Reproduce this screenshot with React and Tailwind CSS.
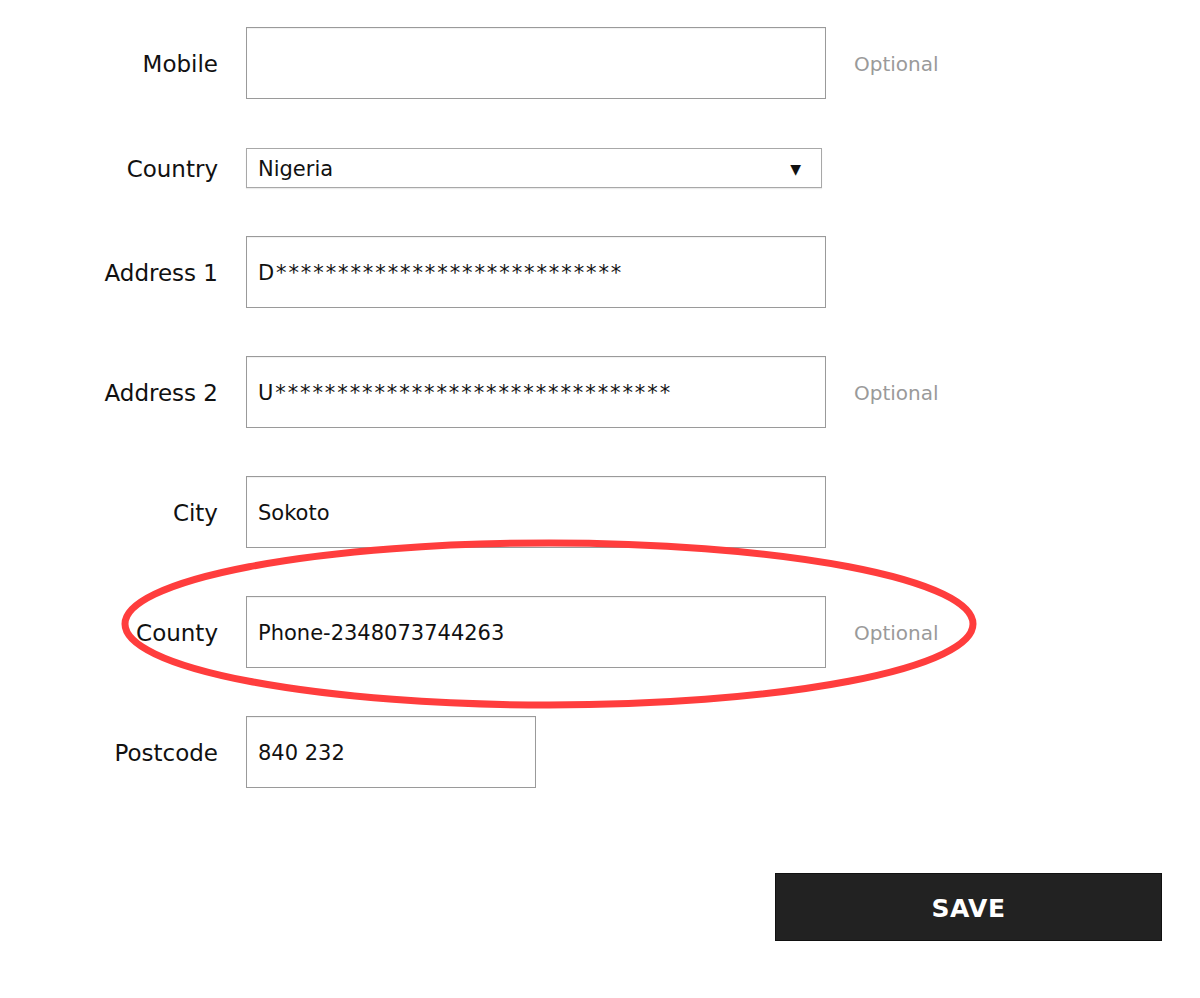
import React from 'react';

const font = { fontFamily: '"DejaVu Sans", Verdana, sans-serif' };

function Row({ label, value = '', optional, masked, width = 'w-[580px]', height = 'h-[72px]' }) {
  return (
    <div className="flex items-center">
      <label className="w-[218px] text-right text-[23px] text-[#111] leading-none pt-[3px]">{label}</label>
      <div
        className={`ml-[28px] ${width} ${height} border border-[#9a9a9a] bg-white flex items-center pl-[11px] pt-[4px] text-[21px] text-[#111] shadow-[inset_0_1px_1px_rgba(0,0,0,0.06)] ${masked ? 'tracking-[1.9px]' : ''}`}
      >
        {value}
      </div>
      {optional && <span className="ml-[28px] pt-[2px] text-[20px] text-[#9a9a9a]">Optional</span>}
    </div>
  );
}

export default function App() {
  return (
    <div className="relative w-[1200px] h-[998px] bg-white overflow-hidden" style={font}>
      <div className="flex flex-col gap-[48px] pt-[27px]">
        <Row label="Mobile" optional />
        <div className="flex items-center mt-[1px]">
          <label className="w-[218px] text-right text-[23px] text-[#111] leading-none pt-[3px]">Country</label>
          <div className="ml-[28px] w-[576px] h-[40px] border border-[#a8a8a8] bg-white flex items-center justify-between pl-[11px] pr-[20px] pt-[3px] text-[21px] text-[#111] shadow-[0_1px_1px_rgba(0,0,0,0.08)]">
            <span>Nigeria</span>
            <span className="text-[14px]">▼</span>
          </div>
        </div>
        <Row label="Address 1" value="D****************************" masked />
        <Row label="Address 2" value="U********************************" optional masked />
        <Row label="City" value="Sokoto" />
        <Row label="County" value="Phone-2348073744263" optional />
        <Row label="Postcode" value="840 232" width="w-[290px]" />
      </div>

      <div className="flex justify-end pr-[38px] mt-[85px]">
        <button className="w-[387px] h-[68px] bg-[#222] border border-[#111] text-white text-[25px] font-bold tracking-[0.5px] pt-[3px]">
          SAVE
        </button>
      </div>

      {/* red annotation ring */}
      <svg className="absolute left-0 top-0 pointer-events-none" width="1200" height="998">
        <ellipse cx="549" cy="624" rx="424" ry="81" fill="none" stroke="#ff3d3d" strokeWidth="7" />
      </svg>
    </div>
  );
}
